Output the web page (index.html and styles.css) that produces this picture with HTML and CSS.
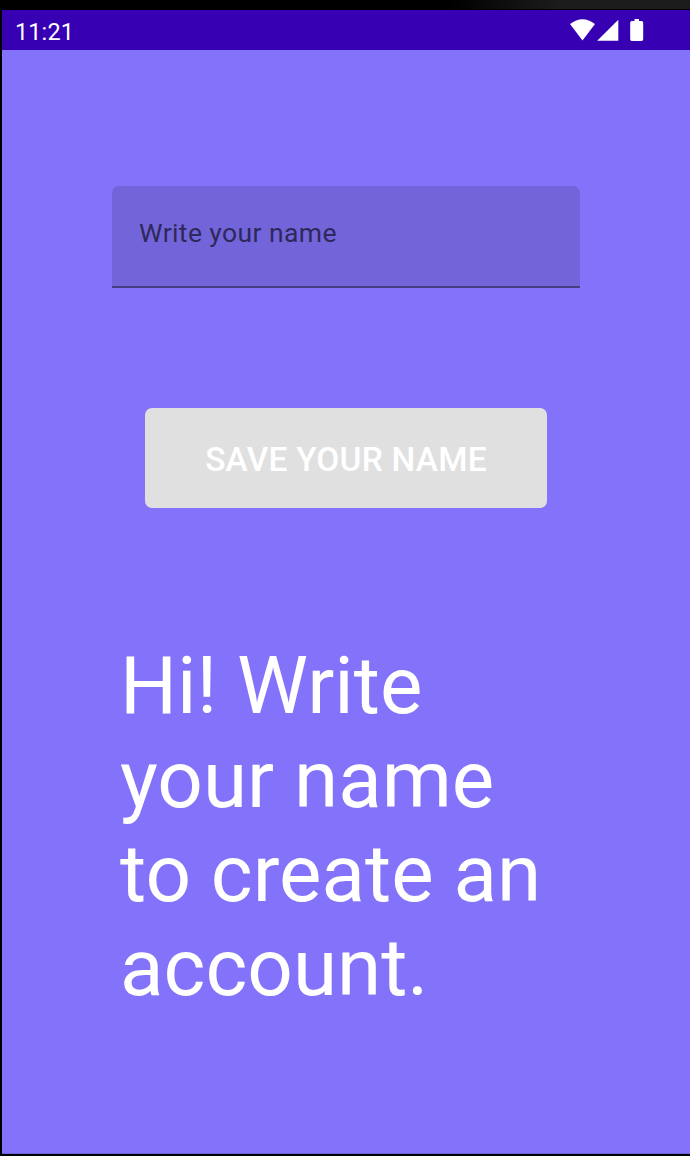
FILE: index.html
```html
<!DOCTYPE html>
<html lang="en">
<head>
<meta charset="utf-8">
<title>Write your name</title>
<link rel="stylesheet" href="styles.css">
</head>
<body>
<div class="device">
  <header class="status">
    <span class="clock">11:21</span>
    <svg class="icons" width="76" height="22" viewBox="0 0 76 22">
      <path d="M0 5Q12.500-4.500 25 5L12.500 21.500Z"/>
      <path d="M48.300 .7V21.800H27.200Z"/>
      <path d="M64.500 0h4.500v2h2.500q1.700 0 1.700 1.700v16.600q0 1.700-1.700 1.700h-9.800q-1.500 0-1.500-1.700v-16.600q0-1.700 1.500-1.700h2.800z"/>
    </svg>
  </header>
  <main class="screen">
    <div class="field">Write your name</div>
    <button class="save">SAVE YOUR NAME</button>
    <p class="greeting">Hi! Write<br>your name<br>to create an<br>account.</p>
  </main>
</div>
</body>
</html>
```
FILE: styles.css
```css
* { box-sizing: border-box; }
body { margin: 0; background: #000; font-family: Roboto, sans-serif; }
.device {
  height: 1156px;
  padding: 10px 0 2px 2px;
  display: flex;
  flex-direction: column;
  background: linear-gradient(90deg, #000 450px, #1c1c1c 560px) top / 100% 9px no-repeat #000;
}
.status {
  height: 40px;
  padding: 0 44px 0 13px;
  display: flex;
  align-items: center;
  justify-content: space-between;
  background: #3700b3;
  color: #fff;
}
.clock { font-size: 23.500px; line-height: 38px; padding-top: 3px; letter-spacing: 0.100px; }
.icons { fill: #fff; }
.screen {
  flex: 1;
  display: flex;
  flex-direction: column;
  align-items: center;
  background: #8373fa;
  border-bottom: 1px solid #7063d6;
}
.field {
  width: 468px;
  height: 102px;
  margin-top: 136px;
  padding: 0 27px;
  border-bottom: 2px solid #453f7f;
  border-radius: 7px 7px 0 0;
  background: #7265d9;
  color: #2e285b;
  font-size: 26.500px;
  line-height: 94px;
  letter-spacing: 0.400px;
}
.save {
  width: 402px;
  height: 100px;
  margin-top: 120px;
  padding: 3px 0 0;
  border: 0;
  border-radius: 7px;
  background: #e0e0e0;
  color: #fff;
  font: 500 33.500px Roboto, sans-serif;
  letter-spacing: 0.200px;
}
.greeting {
  width: 452px;
  margin: 131px 0 0;
  color: #fff;
  font-size: 80px;
  line-height: 94px;
}
```
